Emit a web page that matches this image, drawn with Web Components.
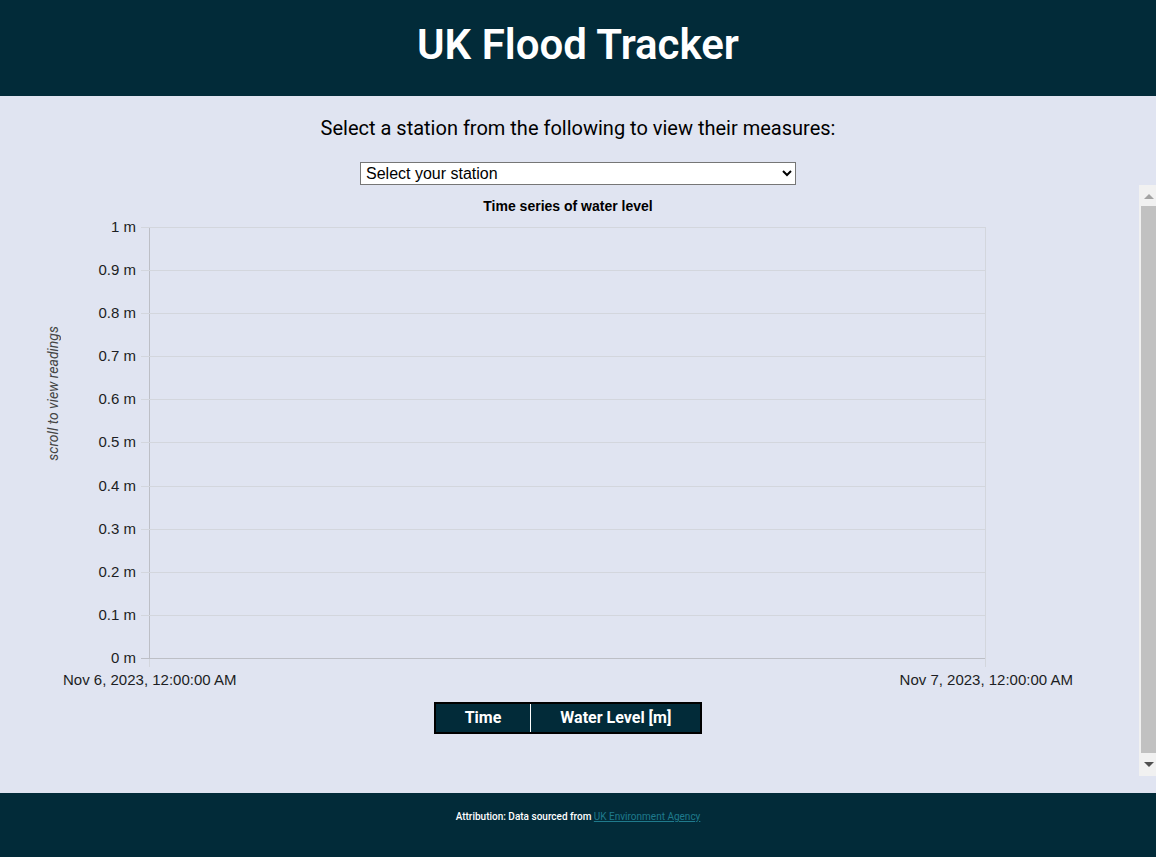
<!DOCTYPE html>
<html lang="en">
<head>
<meta charset="utf-8">
<meta name="viewport" content="width=device-width, initial-scale=1">
<title>UK Flood Tracker</title>
<style>
  html, body { height: 100%; margin: 0; }
  body { background: #e0e4f1; font-family: Roboto, sans-serif; color: #000; }
</style>
</head>
<body>
<flood-app></flood-app>

<script>
  const define = (name, html, setup) => {
    const template = document.createElement('template');
    template.innerHTML = html;
    customElements.define(name, class extends HTMLElement {
      constructor() {
        super();
        this.attachShadow({ mode: 'open' }).append(template.content.cloneNode(true));
      }
      connectedCallback() {
        if (setup) setup(this.shadowRoot, this);
      }
    });
  };

  define('site-header', `
    <style>
      :host { display: block; background: #022b39; color: #fff; text-align: center; }
      h1 { margin: 0; padding: 20px 0 26px; font-size: 42px; line-height: 50px; font-weight: 600; }
    </style>
    <header><h1><slot></slot></h1></header>`);

  define('station-picker', `
    <style>
      :host { display: flex; flex-direction: column; align-items: center; }
      label { margin: 20px 0 22px; font-size: 20px; line-height: 24px; text-align: center; }
      select { width: 436px; max-width: 100%; height: 23px; font: 16px "Liberation Sans", Arial, sans-serif;
        color: #000; background-color: #fff; border: 1px solid #767676; border-radius: 0; padding: 0 1px; }
    </style>
    <label for="station"><slot></slot></label>
    <select id="station"><option>Select your station</option></select>`);

  define('level-chart', `
    <style>
      :host { display: block; font-family: "Liberation Sans", Arial, sans-serif; font-size: 15px; line-height: 18px; color: #1c1e24; }
      figure { margin: 0; display: grid; grid-template-columns: 149px 1fr 150px; }
      figcaption { grid-column: 1 / -1; text-align: center; color: #000; font-weight: 700; font-size: 14px;
        line-height: 18px; padding: 12px 0; }
      .left { display: flex; justify-content: space-between; }
      .note { writing-mode: vertical-rl; transform: rotate(180deg); align-self: center; margin: 0 0 100px 0;
        padding-right: 44px; font: italic 14px/18px Roboto, sans-serif; color: #444; }
      .labels { display: flex; flex-direction: column; justify-content: space-between; margin: -9px 13px -8px 0; text-align: right; }
      .plot { height: 432px; box-sizing: border-box; display: flex; flex-direction: column;
        border-left: 1px solid #bdbfc6; border-right: 1px solid #d3d6dd; }
      .row { flex: 1; border-top: 1px solid #d3d6dd; margin-left: -9px; }
      .row:last-child { border-bottom: 1px solid #bdbfc6; }
      .ticks { grid-column: 2; height: 8px; border: solid #d3d6dd; border-width: 0 1px; }
      .dates { grid-column: 1 / -1; display: flex; justify-content: space-between; padding: 4px 63px 0; }
    </style>
    <figure>
      <figcaption><slot></slot></figcaption>
      <div class="left"><div class="note"><slot name="note"></slot></div><div class="labels"></div></div>
      <div class="plot"></div>
      <div></div>
      <div class="ticks"></div>
      <div class="dates"><span>Nov 6, 2023, 12:00:00 AM</span><span>Nov 7, 2023, 12:00:00 AM</span></div>
    </figure>`,
    root => {
      const labels = root.querySelector('.labels');
      const plot = root.querySelector('.plot');
      for (let i = 10; i >= 0; i--) {
        const label = document.createElement('span');
        label.textContent = i / 10 + ' m';
        labels.append(label);
        if (i) {
          const row = document.createElement('div');
          row.className = 'row';
          plot.append(row);
        }
      }
    });

  define('readings-table', `
    <style>
      :host { display: flex; justify-content: center; }
      table { border: 2px solid #000; border-spacing: 0; background: #022b39; color: #fff; font-size: 16px; line-height: 20px; }
      th { padding: 4px 29px; font-weight: 700; }
      th + th { border-left: 1px solid #fff; }
    </style>
    <table><thead><tr><th scope="col">Time</th><th scope="col">Water Level [m]</th></tr></thead></table>`);

  define('scroll-panel', `
    <style>
      :host { display: flex; min-height: 0; }
      .view { flex: 1; min-width: 0; overflow: auto; scrollbar-width: none; padding-right: 3px; }
      .bar { width: 17px; flex: none; background: #f1f1f1; display: flex; flex-direction: column; }
      svg { display: block; width: 17px; height: 21px; flex: none; }
      .thumb { flex: 1; margin-left: 2px; background: #c1c1c1; }
      svg:last-child { height: 23px; }
    </style>
    <div class="view"><slot></slot></div>
    <div class="bar" aria-hidden="true">
      <svg viewBox="0 0 17 21"><path d="M5 14L10 9L15 14Z" fill="#a3a3a3"/></svg>
      <div class="thumb"></div>
      <svg viewBox="0 0 17 23"><path d="M5 9L10 14L15 9Z" fill="#505050"/></svg>
    </div>`);

  define('site-footer', `
    <style>
      :host { display: block; background: #022b39; color: #fff; text-align: center; }
      p { margin: 0; padding: 16px 0 32px; font-size: 10px; line-height: 16px; font-weight: 500; }
      a { color: #1f7a8c; font-weight: 400; }
    </style>
    <footer><p>Attribution: Data sourced from <a href="#">UK Environment Agency</a></p></footer>`);

  define('flood-app', `
    <style>
      :host { display: flex; flex-direction: column; height: 100%; }
      main { flex: 1; min-height: 0; display: flex; flex-direction: column; }
      scroll-panel { flex: 1; margin-bottom: 17px; }
      readings-table { margin-top: 13px; }
    </style>
    <site-header>UK Flood Tracker</site-header>
    <main>
      <station-picker>Select a station from the following to view their measures:</station-picker>
      <scroll-panel>
        <level-chart>Time series of water level<span slot="note">scroll to view readings</span></level-chart>
        <readings-table></readings-table>
      </scroll-panel>
    </main>
    <site-footer></site-footer>`);
</script>
</body>
</html>
